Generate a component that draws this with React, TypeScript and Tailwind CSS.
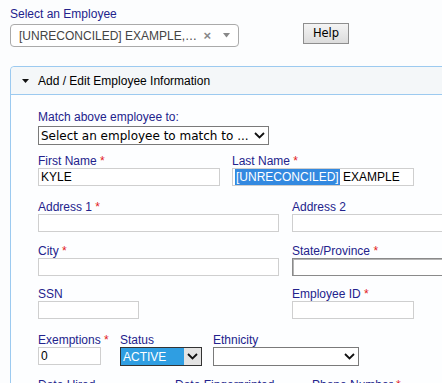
import React from "react";

const sans = "font-['Liberation_Sans',Arial,sans-serif]";
const verdana = "font-['DejaVu_Sans',Verdana,sans-serif]";

const Label = ({ text, req }: { text: string; req?: boolean }) => (
  <div className={`h-[14px] text-[12px] leading-[14px] text-[#23238c] whitespace-nowrap ${sans}`}>
    {text}
    {req && <span className="text-[#e21b1b]"> *</span>}
  </div>
);

const Box = ({ w, dark, children }: { w: string; dark?: boolean; children?: React.ReactNode }) => (
  <div
    className={`${w} h-[18px] bg-white border ${
      dark ? "border-[#8a8a8a] shadow-[inset_1px_1px_0_#b5b5b5]" : "border-[#cfcfcf]"
    } flex items-center pl-[2px] text-[12px] text-black whitespace-nowrap overflow-hidden ${sans}`}
  >
    {children}
  </div>
);

const Chevron = () => (
  <svg width="11" height="7" viewBox="0 0 11 7" className="shrink-0">
    <polyline points="1,1 5.5,5.5 10,1" fill="none" stroke="#111" strokeWidth="1.8" />
  </svg>
);

const App = () => {
  return (
    <div className="w-screen h-screen overflow-hidden bg-[#fcfdfe]">
      {/* employee picker */}
      <div className="pl-[10px] pt-[7px]">
        <div className={`h-[14px] text-[12px] leading-[14px] text-[#23238c] ${sans}`}>Select an Employee</div>
        <div className="flex items-start mt-[3px]">
          <div className="w-[229px] h-[23px] rounded-[4px] border border-[#aaaaaa] bg-white flex items-center pl-[8px] pr-[8px]">
            <span className={`flex-1 text-[12px] text-[#444] whitespace-nowrap ${sans}`}>[UNRECONCILED] EXAMPLE,…</span>
            <span className={`text-[13px] font-bold text-[#888] leading-none mr-[12px] ${sans}`}>×</span>
            <svg width="7" height="5" viewBox="0 0 7 5">
              <polygon points="0,0 7,0 3.5,4.5" fill="#888" />
            </svg>
          </div>
          <button
            className={`ml-[64px] -mt-[1px] w-[46px] h-[21px] border border-[#8e8e8e] bg-gradient-to-b from-[#f4f4f4] to-[#dcdcdc] text-[11.5px] text-black ${verdana}`}
          >
            Help
          </button>
        </div>
      </div>

      {/* panel */}
      <div className="ml-[10px] mt-[19px] w-[640px] border border-[#9ccaf0] rounded-tl-[4px]">
        <div className="h-[28px] bg-[#f4f7f9] border-b border-[#9ccaf0] rounded-tl-[4px] flex items-center pl-[11px]">
          <svg width="7" height="4" viewBox="0 0 7 4" className="mr-[9px]">
            <polygon points="0,0 7,0 3.5,4" fill="#111" />
          </svg>
          <span className={`text-[12px] text-black ${sans}`}>Add / Edit Employee Information</span>
        </div>

        <div className="pl-[27px] pt-[15px] h-[400px] bg-[#fdfeff]">
          {/* match */}
          <Label text="Match above employee to:" />
          <div className="mt-[2px] w-[231px] h-[19px] border border-[#7a7a7a] bg-white flex items-center pl-[2px] pr-[3px]">
            <span className={`flex-1 text-[12px] text-black whitespace-nowrap ${verdana}`}>
              Select an employee to match to ...
            </span>
            <Chevron />
          </div>

          {/* names */}
          <div className="flex gap-[12px] mt-[9px]">
            <div className="w-[182px]">
              <Label text="First Name" req />
              <Box w="w-[182px]">KYLE</Box>
            </div>
            <div className="w-[182px]">
              <Label text="Last Name" req />
              <Box w="w-[182px]">
                <span className="bg-[#3389e0] text-white px-[1px]">[UNRECONCILED]</span>
                <span>&nbsp;EXAMPLE</span>
              </Box>
            </div>
          </div>

          {/* address */}
          <div className="flex gap-[13px] mt-[14px]">
            <div className="w-[241px]">
              <Label text="Address 1" req />
              <Box w="w-[241px]" />
            </div>
            <div className="w-[241px]">
              <Label text="Address 2" />
              <Box w="w-[241px]" />
            </div>
          </div>

          {/* city */}
          <div className="flex gap-[13px] mt-[12px]">
            <div className="w-[241px]">
              <Label text="City" req />
              <Box w="w-[241px]" />
            </div>
            <div className="w-[241px]">
              <Label text="State/Province" req />
              <Box w="w-[241px]" dark />
            </div>
          </div>

          {/* ssn */}
          <div className="flex mt-[11px]">
            <div className="w-[254px]">
              <Label text="SSN" />
              <Box w="w-[101px]" />
            </div>
            <div className="w-[200px]">
              <Label text="Employee ID" req />
              <Box w="w-[122px]" />
            </div>
          </div>

          {/* exemptions / status / ethnicity */}
          <div className="flex mt-[14px]">
            <div className="w-[82px]">
              <Label text="Exemptions" req />
              <Box w="w-[63px]">0</Box>
            </div>
            <div className="w-[93px]">
              <Label text="Status" />
              <div className="w-[82px] h-[19px] border border-[#333] bg-[#e3e3e3] flex items-center">
                <span className={`h-full w-[63px] bg-[#2f9ee2] text-white text-[12px] flex items-center pl-[2px] ${sans}`}>
                  ACTIVE
                </span>
                <span className="flex-1 flex justify-center">
                  <Chevron />
                </span>
              </div>
            </div>
            <div className="w-[160px]">
              <Label text="Ethnicity" />
              <div className="w-[146px] h-[19px] border border-[#7a7a7a] bg-white flex items-center justify-end pr-[3px]">
                <Chevron />
              </div>
            </div>
          </div>

          {/* dates */}
          <div className="flex mt-[12px]">
            <div className="w-[137px]">
              <Label text="Date Hired" />
            </div>
            <div className="w-[137px]">
              <Label text="Date Fingerprinted" />
            </div>
            <div className="w-[160px]">
              <Label text="Phone Number" req />
            </div>
          </div>
        </div>
      </div>
    </div>
  );
};

export default App;
